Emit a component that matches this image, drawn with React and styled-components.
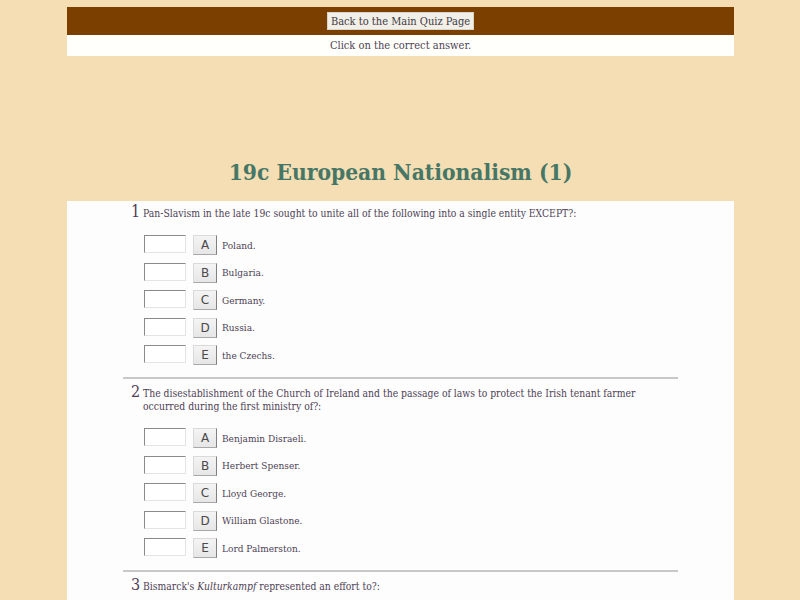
import React from 'react';
import styled, { createGlobalStyle } from 'styled-components';

const GlobalStyle = createGlobalStyle`
  html, body {
    margin: 0;
    padding: 0;
    background: #f5deb3;
  }
  body {
    font-family: "DejaVu Serif Condensed", "DejaVu Serif", serif;
    color: #4e3f55;
  }
`;

const Page = styled.div`
  width: 667px;
  margin: 7px auto 0;
  padding-left: 1px;
`;

const TopBar = styled.div`
  background: #7b3f00;
  height: 28px;
  display: flex;
  align-items: center;
  justify-content: center;
`;

const BackButton = styled.button`
  font-family: "DejaVu Serif Condensed", "DejaVu Serif", serif;
  font-size: 11px;
  color: #3e3a44;
  background: #f1efe8;
  border: 1px solid #d8d4c8;
  padding: 0 3px;
  height: 18px;
`;

const Hint = styled.div`
  background: #fffffb;
  height: 21px;
  display: flex;
  align-items: center;
  justify-content: center;
  font-size: 11px;
`;

const Title = styled.h1`
  margin: 0;
  padding: 103px 0 16px;
  text-align: center;
  font-family: "DejaVu Serif Condensed", "DejaVu Serif", serif;
  font-weight: bold;
  font-size: 22.6px;
  color: #467766;
`;

const Panel = styled.div`
  background: #fdfdfd;
  min-height: 420px;
`;

const Quiz = styled.div`
  width: 555px;
  margin: 0 auto;
`;

const Question = styled.div`
  padding: ${p => (p.first ? '4px' : '6px')} 0 12px;
  border-bottom: ${p => (p.last ? 'none' : '2px solid #c8c8c8')};
`;

const Stem = styled.div`
  display: flex;
  align-items: baseline;
  padding-left: 8px;
  margin-bottom: 15px;
`;

const Num = styled.span`
  font-size: 16px;
  line-height: 13px;
  width: 12px;
  flex: none;
`;

const StemText = styled.div`
  font-size: 10.3px;
  line-height: 13px;
`;

const Options = styled.div`
  display: flex;
  flex-direction: column;
  gap: 7.5px;
  padding-left: 21px;
`;

const Option = styled.div`
  display: flex;
  align-items: center;
  height: 20px;
`;

const Box = styled.input`
  width: 42px;
  height: 18px;
  box-sizing: border-box;
  border: 1px solid #e4e4e4;
  border-top-color: #8a8a8a;
  border-left-color: #8a8a8a;
  background: #fff;
  margin: 0 7px 2px 0;
  padding: 0;
`;

const Letter = styled.button`
  width: 24px;
  height: 20px;
  box-sizing: border-box;
  font-family: "DejaVu Sans", sans-serif;
  font-size: 12px;
  color: #4a4a4a;
  background: linear-gradient(#f4f4f4, #e6e6e6);
  border: 1px solid #dadada;
  border-right: 1px solid #808080;
  border-bottom: 1px solid #a8a8a8;
  padding: 0;
  margin-right: 5px;
`;

const Answer = styled.span`
  font-size: 10px;
`;

const questions = [
  {
    text: 'Pan-Slavism in the late 19c sought to unite all of the following into a single entity EXCEPT?:',
    answers: ['Poland.', 'Bulgaria.', 'Germany.', 'Russia.', 'the Czechs.'],
  },
  {
    text: 'The disestablishment of the Church of Ireland and the passage of laws to protect the Irish tenant farmer occurred during the first ministry of?:',
    answers: ['Benjamin Disraeli.', 'Herbert Spenser.', 'Lloyd George.', 'William Glastone.', 'Lord Palmerston.'],
  },
  {
    text: (
      <>
        Bismarck's <i>Kulturkampf</i> represented an effort to?:
      </>
    ),
    answers: ['reduce the influence of the Catholic Church in Germany.'],
  },
];

const letters = ['A', 'B', 'C', 'D', 'E'];

export default function App() {
  return (
    <>
      <GlobalStyle />
      <Page>
        <TopBar>
          <BackButton>Back to the Main Quiz Page</BackButton>
        </TopBar>
        <Hint>Click on the correct answer.</Hint>
        <Title>19c European Nationalism (1)</Title>
        <Panel>
          <Quiz>
            {questions.map((q, i) => (
              <Question key={i} first={i === 0} last={i === questions.length - 1}>
                <Stem>
                  <Num>{i + 1}</Num>
                  <StemText>{q.text}</StemText>
                </Stem>
                <Options>
                  {q.answers.map((a, j) => (
                    <Option key={j}>
                      <Box type="text" />
                      <Letter>{letters[j]}</Letter>
                      <Answer>{a}</Answer>
                    </Option>
                  ))}
                </Options>
              </Question>
            ))}
          </Quiz>
        </Panel>
      </Page>
    </>
  );
}
